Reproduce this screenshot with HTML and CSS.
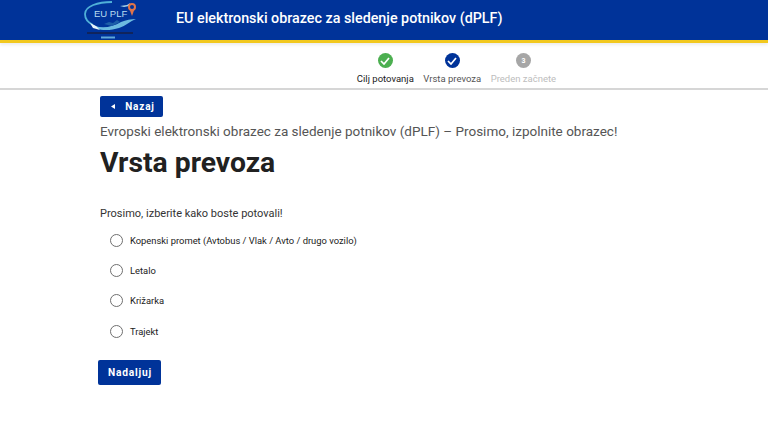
FILE: index.html
```html
<!DOCTYPE html>
<html lang="sl">
<head>
  <meta charset="UTF-8" />
  <title>Vrsta prevoza - dPLF</title>
  <link rel="stylesheet" href="styles.css">
</head>
<body>

  <header class="topbar">
    <svg class="logo" width="60" height="42" viewBox="0 0 60 42" aria-hidden="true">
      <path d="M30 2C16 2 3 6 3 14c0 5 4 9 8 11" fill="none" stroke="#4fb0d8" stroke-width="1.800"/>
      <path d="M38 6l7-1 3-2-1 3-5 1z" fill="#a9d5ea"/>
      <path d="M7 22c8 8 22 6 32 0 5-2 10-3 15-3-6 2-10 7-17 9-10 3-24 4-30-6z" fill="#6dbbe0"/>
      <path d="M8 23l6 3 4 4-7-2z" fill="#e8f4fa"/>
      <path d="M22 24l5-2 4 1 4-3 3 2-8 4z" fill="#1d5fa8"/>
      <circle cx="50" cy="7" r="3" fill="none" stroke="#e0744a" stroke-width="2"/>
      <path d="M47.800 10l2.200 6 2.200-6z" fill="#e0744a"/>
      <text x="12" y="17" class="logo-text">EU PLF</text>
      <rect x="5" y="32" width="46" height="2" fill="#10245c"/>
      <rect x="19" y="36.500" width="14" height="2" fill="#5fa8d8"/>
    </svg>
    <div class="topbar-title">EU elektronski obrazec za sledenje potnikov (dPLF)</div>
  </header>

  <nav class="steps">
    <div class="step">
      <span class="dot done">
        <svg width="10" height="8" viewBox="0 0 10 8"><path d="M1 4l3 3 5-6" fill="none" stroke="#fff" stroke-width="1.700"/></svg>
      </span>
      <span>Cilj potovanja</span>
    </div>
    <div class="step">
      <span class="dot current">
        <svg width="10" height="8" viewBox="0 0 10 8"><path d="M1 4l3 3 5-6" fill="none" stroke="#fff" stroke-width="1.700"/></svg>
      </span>
      <span class="muted">Vrsta prevoza</span>
    </div>
    <div class="step">
      <span class="dot todo">3</span>
      <span class="disabled">Preden začnete</span>
    </div>
  </nav>

  <main class="container">
    <a href="#" class="btn btn-back">
      <svg width="4" height="5" viewBox="0 0 4 5"><path d="M4 0v5L0 2.500z" fill="#fff"/></svg>
      Nazaj
    </a>
    <p class="lead">Evropski elektronski obrazec za sledenje potnikov (dPLF) – Prosimo, izpolnite obrazec!</p>
    <h1>Vrsta prevoza</h1>

    <p class="question">Prosimo, izberite kako boste potovali!</p>
    <div class="options">
      <label class="option"><span class="radio"></span>Kopenski promet (Avtobus / Vlak / Avto / drugo vozilo)</label>
      <label class="option"><span class="radio"></span>Letalo</label>
      <label class="option"><span class="radio"></span>Križarka</label>
      <label class="option"><span class="radio"></span>Trajekt</label>
    </div>

    <a href="#" class="btn btn-next">Nadaljuj</a>
  </main>

</body>
</html>
```

FILE: styles.css
```css
* { box-sizing: border-box; }

html, body {
  height: 100%;
}

body {
  margin: 0;
  font-family: Roboto, "Liberation Sans", sans-serif;
  background: #fff;
  color: #212121;
  overflow: hidden;
}

.topbar {
  display: flex;
  align-items: center;
  height: 43px;
  padding-left: 82px;
  background: #003399;
  border-bottom: 3px solid #f2c81e;
  box-shadow: 0 2px 3px rgba(0, 0, 0, 0.08);
}

.logo {
  flex: none;
  align-self: flex-start;
}

.logo-text {
  font-family: "Liberation Sans", sans-serif;
  font-size: 9.500px;
  fill: #b9dcf0;
}

.topbar-title {
  margin-left: 34px;
  margin-top: -4px;
  font-size: 14.300px;
  font-weight: 500;
  color: #fff;
}

.steps {
  display: flex;
  justify-content: center;
  gap: 9.500px;
  height: 47px;
  padding-top: 10px;
  padding-left: 145px;
  border-bottom: 2px solid #d6d6d6;
  font-size: 9.500px;
}

.step {
  display: flex;
  flex-direction: column;
  align-items: center;
  gap: 5px;
  color: #212121;
}

.muted { color: #555; }
.disabled { color: #bdbdbd; }

.dot {
  display: flex;
  align-items: center;
  justify-content: center;
  width: 15px;
  height: 15px;
  border-radius: 50%;
  color: #fff;
  font-size: 7px;
  font-weight: 700;
}

.done { background: #4caf50; }
.current { background: #003399; }
.todo { background: #a6a6a6; }

.container {
  padding: 6px 0 0 100px;
}

.btn {
  display: flex;
  align-items: center;
  justify-content: center;
  background: #003399;
  color: #fff;
  font-weight: 700;
  letter-spacing: 0.8px;
  text-decoration: none;
  border-radius: 2px;
}

.btn-back {
  gap: 10px;
  width: 63px;
  height: 21px;
  padding-left: 3px;
  font-size: 10px;
}

.lead {
  margin: 6px 0 0;
  font-size: 13.500px;
  line-height: 16px;
  color: #555;
}

h1 {
  margin: 6px 0 0;
  font-size: 28.300px;
  line-height: 36px;
  font-weight: 700;
  color: #212121;
}

.question {
  margin: 26px 0 0;
  font-size: 11px;
  line-height: 14px;
  color: #333;
}

.options {
  display: flex;
  flex-direction: column;
  margin-top: 4px;
}

.option {
  display: flex;
  align-items: center;
  gap: 7px;
  height: 30.330px;
  padding-left: 10px;
  font-size: 9.400px;
  color: #212121;
}

.radio {
  width: 13px;
  height: 13px;
  border: 1px solid #6f6f6f;
  border-radius: 50%;
}

.btn-next {
  width: 63px;
  height: 25px;
  margin: 14px 0 0 -2px;
  padding-left: 1px;
  font-size: 10.200px;
}
```
